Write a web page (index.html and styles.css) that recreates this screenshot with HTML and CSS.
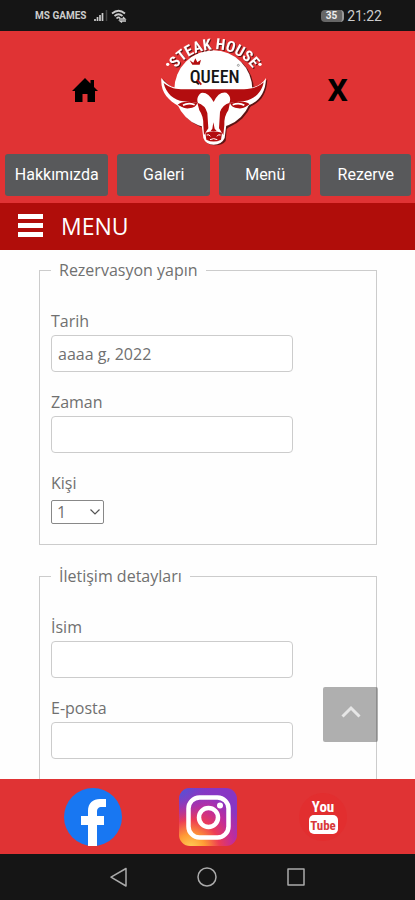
FILE: index.html
```html
<!DOCTYPE html>
<html lang="tr">
<head>
<meta charset="utf-8">
<meta name="viewport" content="width=device-width, initial-scale=1">
<title>Queen Steak House</title>
<link rel="stylesheet" href="styles.css">
</head>
<body>
<div class="status">
  <div class="status-side">
    <span class="carrier">MS GAMES</span>
    <svg class="signal" viewBox="0 0 14 12" aria-hidden="true"><path d="M1 11V9M3.500 11V7M6 11V5M8.500 11V3" stroke="#ccc" stroke-width="1.700"/><path d="M12.500 11V0" stroke="#444" stroke-width="1.500"/></svg>
    <svg class="wifi" viewBox="0 0 16 14" aria-hidden="true"><g fill="none" stroke="#ccc" stroke-width="1.700"><path d="M1 4.500Q7.500-1 14 4.500M3.500 7Q7.500 3.500 11.500 7M5.500 9.500Q7.500 7.500 9 9"/><path d="M8 10h6l-2-2M15 12H9l2 1.500" stroke-width="1.300"/></g></svg>
  </div>
  <div class="status-side">
    <span class="battery">35</span>
    <span class="clock">21:22</span>
  </div>
</div>

<header class="header">
  <div class="brand-row">
    <a class="home-link" href="#" aria-label="Ana sayfa"><svg class="home" viewBox="0 0 26 24"><path d="M13 0L0 13h3v11h7.500v-8h5v8H23V13h3l-4-4V2h-3.500v3.500z"/></svg></a>
    <svg class="logo" viewBox="-6 0 390 366" role="img" aria-label="Steak House Queen">
      <defs><path id="arc" d="M52 208A144 144 0 0 1 340 208"/></defs>
      <g fill="#5c1414" transform="translate(5 4)"><circle cx="193" cy="184" r="117"/><path d="M38 150C60 178 78 182 100 182H290C318 180 338 170 350 150C348 200 325 222 298 232L228 300L225 335Q215 348 194 348Q172 348 164 335L160 300L92 234C60 215 36 195 38 150Z"/></g>
      <circle cx="193" cy="184" r="117" fill="#fff"/>
      <path fill="#fff" d="M37 150C58 176 76 181 100 181H290C316 180 338 172 351 150C350 200 325 222 300 232L232 290L227 330Q218 350 194 350Q170 350 163 330L158 290L88 234C58 215 34 195 37 150Z"/>
      <g fill="#b30d0f">
        <path d="M44 165C64 181 82 184 104 184H285C310 183 328 177 344 163C338 194 316 214 287 219Q263 222 241 225Q249 206 232 194Q209 190 194 222Q176 190 156 195Q140 208 147 225L104 220C74 217 51 196 44 165Z"/>
        <path d="M86 230Q102 215 145 225Q141 239 120 241Q107 242 100 238ZM302 229Q286 215 243 225Q247 239 268 241Q281 242 288 238Z"/>
        <path d="M145 224Q169 231 175 255L178 301L165 321L163 292Q164 265 151 247Z"/>
        <path d="M243 224Q220 230 213 252L210 301L223 321L226 291Q225 264 238 247Z"/>
        <path d="M169 314Q193 305 219 314L216 335Q194 346 172 335Z"/>
        <path d="M193 283L197 302L203 309H185L190 302Z"/>
      </g>
      <path d="M102 232Q117 223 137 230M286 232Q271 223 251 230M94 238Q115 255 147 241M294 238Q273 255 241 241" fill="none" stroke="#fff" stroke-width="5"/>
      <path d="M173 321Q181 318 184 325M215 321Q207 318 204 325M183 335Q194 329 205 335" fill="none" stroke="#fff" stroke-width="3"/>
      <text class="logo-arc"><textPath href="#arc" startOffset="50%" text-anchor="middle">STEAK HOUSE</textPath></text>
      <g fill="#fff"><circle cx="56" cy="109" r="5"/><circle cx="333" cy="109" r="5"/></g>
      <text class="logo-name" x="197" y="164" text-anchor="middle">QUEEN</text>
      <path d="M130 110L122 97L133 104L139 91L145 103L156 95L152 110Z" fill="#b30d0f"/>
      <path d="M144 155L157 170" stroke="#b30d0f" stroke-width="5"/>
      <circle cx="268" cy="112" r="3" fill="none" stroke="#777" stroke-width="2"/>
    </svg>
    <button class="close" type="button">X</button>
  </div>
  <nav class="tabs">
    <a class="tab" href="#">Hakkımızda</a>
    <a class="tab" href="#">Galeri</a>
    <a class="tab" href="#">Menü</a>
    <a class="tab" href="#">Rezerve</a>
  </nav>
</header>

<button class="menu-bar" type="button"><span class="burger"></span>MENU</button>

<div class="content">
  <main class="page">
    <form>
      <fieldset class="group">
        <legend>Rezervasyon yapın</legend>
        <div class="field"><label for="date">Tarih</label><input id="date" type="text" value="aaaa g, 2022"></div>
        <div class="field"><label for="time">Zaman</label><input id="time" type="text"></div>
        <div class="field">
          <label for="people">Kişi</label>
          <span class="select"><select id="people"><option>1</option></select><svg viewBox="0 0 10 6" aria-hidden="true"><path d="M0.500 0.500L5 5L9.500 0.500" fill="none" stroke="#555" stroke-width="1.200"/></svg></span>
        </div>
      </fieldset>
      <fieldset class="group">
        <legend>İletişim detayları</legend>
        <div class="field"><label for="name">İsim</label><input id="name" type="text"></div>
        <div class="field"><label for="email">E-posta</label><input id="email" type="email"></div>
      </fieldset>
    </form>
  </main>
  <button class="to-top" type="button" aria-label="Yukarı"><svg viewBox="0 0 20 13"><path d="M1.500 11.500L10 3L18.500 11.500" fill="none" stroke="#e6e6e6" stroke-width="3"/></svg></button>
</div>

<footer class="social">
  <a href="#" aria-label="Facebook"><svg class="social-icon" viewBox="0 0 58 58"><circle cx="29" cy="29" r="29" fill="#1877f2"/><path fill="#fff" d="M24 58V37h-7v-9h7v-5c0-8 5-12 12-12h6v8h-4c-4 0-5 2-5 5v4h7v9h-7v21z"/></svg></a>
  <a href="#" aria-label="Instagram"><svg class="social-icon" viewBox="0 0 58 58">
    <defs><radialGradient id="warm" cx=".2" cy="1.050" r="1"><stop offset="0" stop-color="#ffd25a"/><stop offset=".25" stop-color="#ff9c35"/><stop offset=".5" stop-color="#ed3c54"/><stop offset=".75" stop-color="#c02c9c"/><stop offset="1" stop-color="#8736c4"/></radialGradient><radialGradient id="cool" cx="0" cy="0" r=".6"><stop offset="0" stop-color="#4b58d8"/><stop offset="1" stop-color="#8736c4" stop-opacity="0"/></radialGradient></defs>
    <rect width="58" height="58" rx="11" fill="url(#warm)"/><rect width="58" height="58" rx="11" fill="url(#cool)"/>
    <g fill="none" stroke="#fff" stroke-width="4.500"><rect x="9.500" y="9.500" width="40" height="40" rx="11"/><circle cx="29.500" cy="29.500" r="9.500"/></g><circle cx="41" cy="17.500" r="3" fill="#fff"/></svg></a>
  <a href="#" aria-label="YouTube"><svg class="social-icon" viewBox="0 0 58 58"><circle cx="29" cy="29" r="24" fill="#e22e2f"/><text class="yt yt-you" x="29" y="24" text-anchor="middle">You</text><rect x="15" y="27" width="29" height="19" rx="5" fill="#fff"/><text class="yt yt-tube" x="29" y="42" text-anchor="middle">Tube</text></svg></a>
</footer>

<nav class="system">
  <button type="button" aria-label="Geri"><svg viewBox="0 0 22 22"><path d="M18 2.500V20L3 11.200z"/></svg></button>
  <button type="button" aria-label="Ana ekran"><svg viewBox="0 0 22 22"><circle cx="11" cy="11" r="9"/></svg></button>
  <button type="button" aria-label="Son uygulamalar"><svg viewBox="0 0 22 22"><rect x="3" y="3" width="16" height="16"/></svg></button>
</nav>
</body>
</html>
```
FILE: styles.css
```css
* { box-sizing: border-box; }
body {
  margin: 0;
  height: 100vh;
  display: flex;
  flex-direction: column;
  background: #fefefe;
  color: #707070;
  font: 16px/22px "Open Sans", sans-serif;
}
button { border: 0; padding: 0; background: none; font: inherit; cursor: pointer; }
a { text-decoration: none; }
svg { display: block; }

.status {
  display: flex;
  justify-content: space-between;
  padding: 0 33px 0 35px;
  height: 31px;
  background: #151515;
  color: #ccc;
}
.status-side { display: flex; align-items: center; gap: 3px; }
.carrier { font: 700 10px/14px Roboto, sans-serif; margin-right: 5px; }
.signal { width: 14px; height: 12px; }
.wifi { width: 16px; height: 14px; }
.battery {
  padding: 0 5px;
  border-radius: 4px;
  border-right: 2px solid #999;
  background: #666;
  color: #eee;
  font: 700 10px/12px Roboto, sans-serif;
}
.clock { font: 14px/16px Roboto, sans-serif; }

.header { background: #e03334; padding-bottom: 7px; }
.brand-row {
  display: grid;
  grid-template-columns: repeat(3, 1fr);
  place-items: center;
  padding: 0 16px 0 24px;
}
.home-link, .close { margin-bottom: 6px; }
.home { width: 26px; height: 24px; }
.logo { width: 130px; height: 122px; margin: -3px 0 4px; }
.logo-arc {
  fill: #fff;
  font: 700 46px "Roboto Condensed", "Liberation Sans Narrow", "Liberation Sans", sans-serif;
  filter: drop-shadow(3px 3px 0 #5c1414);
}
.logo-name { fill: #151515; font: 500 54px "Roboto Condensed", "Liberation Sans Narrow", "Liberation Sans", sans-serif; }
.close { color: #000; font: 700 32px/32px Roboto, sans-serif; }

.tabs {
  display: grid;
  grid-template-columns: 104fr 93fr 93fr 91fr;
  gap: 9px;
  padding: 0 4px 0 5px;
}
.tab {
  border-radius: 3px;
  background: #58595b;
  color: #fff;
  font: 16px/42px Roboto, sans-serif;
  text-align: center;
}

.menu-bar {
  display: flex;
  align-items: center;
  gap: 18px;
  padding: 0 18px 2px;
  height: 47px;
  background: #b00d0a;
  color: #fff;
  font-size: 23px;
}
.burger {
  width: 25px;
  height: 23px;
  background: repeating-linear-gradient(#fff 0 5px, transparent 5px 9px);
}

.content { flex: 1; min-height: 0; position: relative; }
.page { height: 100%; overflow: hidden; padding: 9px 38px 0 39px; }
.group { margin: 0 0 20px; padding: 29px 11px 20px; border: 1px solid #ccc; min-width: 0; }
.group:last-child { padding-bottom: 60px; }
legend { padding: 0 8px; }
.field { margin-bottom: 19px; }
.field:last-child { margin-bottom: 0; }
label { display: block; margin-bottom: 3px; }
input {
  display: block;
  width: 77%;
  height: 37px;
  padding: 0 6px;
  border: 1px solid #ccc;
  border-radius: 4px;
  background: #fff;
  color: #707070;
  font: inherit;
}
.select { display: block; position: relative; width: 53px; margin-top: 6px; }
.select svg { position: absolute; right: 4px; top: 9px; width: 10px; height: 6px; pointer-events: none; }
select {
  display: block;
  appearance: none;
  width: 100%;
  height: 24px;
  padding: 0 5px;
  border: 1px solid #888;
  border-radius: 2px;
  background: #fff;
  color: #707070;
  font: inherit;
}
.to-top {
  position: absolute;
  right: 37px;
  bottom: 37px;
  display: grid;
  place-items: center;
  width: 55px;
  height: 55px;
  border-radius: 2px;
  background: rgba(0, 0, 0, 0.31);
}
.to-top svg { width: 20px; height: 13px; margin-bottom: 6px; }

.social {
  display: grid;
  grid-template-columns: repeat(3, 1fr);
  place-items: center;
  padding: 0 35px;
  height: 75px;
  background: #e03334;
}
.social-icon { width: 58px; height: 58px; }
.yt { font: 700 15px "Roboto Condensed", "Liberation Sans Narrow", "Liberation Sans", sans-serif; }
.yt-you { fill: #fff; }
.yt-tube { fill: #d8383a; font-size: 13px; }

.system {
  display: grid;
  grid-template-columns: repeat(3, 1fr);
  place-items: center;
  padding: 0 75px;
  height: 46px;
  background: #151515;
}
.system svg { width: 22px; height: 22px; fill: none; stroke: #aaa; stroke-width: 1.5; stroke-linejoin: round; }
```
